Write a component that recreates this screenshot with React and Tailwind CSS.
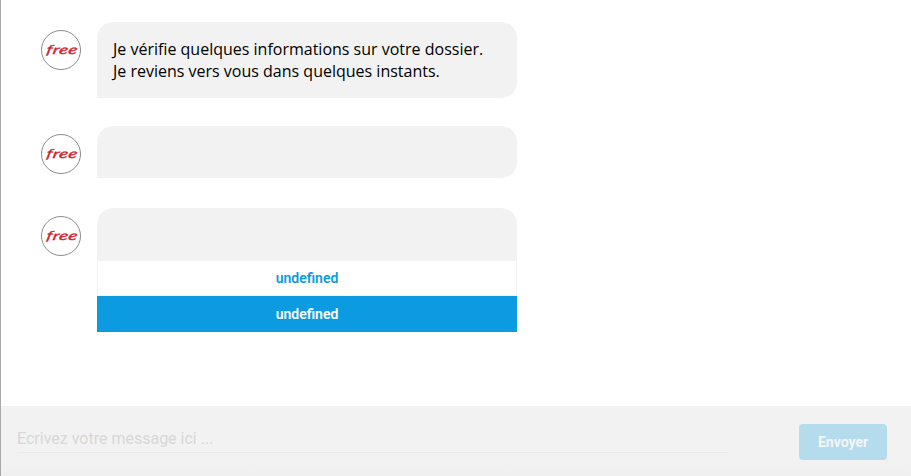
import { useState } from 'react';

const messages = [
    { id: 1, lines: ['Je vérifie quelques informations sur votre dossier.', 'Je reviens vers vous dans quelques instants.'], choices: [] },
    { id: 2, lines: [], choices: [] },
    { id: 3, lines: [], choices: [
        { label: 'undefined', primary: false },
        { label: 'undefined', primary: true },
    ] },
];

function Avatar() {
    return (
        <div className="mt-2 h-10 w-10 shrink-0 overflow-hidden rounded-full border border-[#8c8c8c] bg-white">
            <svg viewBox="0 0 38 38" className="h-full w-full" role="img" aria-label="free">
                {/* étiré en largeur, avec un peu d'air entre les lettres */}
                <text
                    transform="translate(3.8 22.9) skewX(-12) scale(1.48 1)"
                    className="fill-[#d2202c] stroke-[#d2202c] stroke-[0.35] font-['Lato'] text-[12.5px] font-normal tracking-[0.3px] italic"
                >
                    free
                </text>
            </svg>
        </div>
    );
}

function Message({ lines, choices }) {
    const corners = choices.length ? 'rounded-t-2xl' : 'rounded-2xl rounded-bl-none';

    return (
        <div className="flex gap-4">
            <Avatar />
            <div className="w-[420px]">
                <div className={`min-h-[52px] bg-[#f2f2f2] p-4 text-base leading-[22px] text-black font-['Open_Sans',sans-serif] ${corners}`}>
                    {lines.map(line => (
                        <p key={line} className="whitespace-nowrap">{line}</p>
                    ))}
                </div>
                {choices.map((choice, i) => (
                    <button
                        key={i}
                        className={`block h-9 w-full border text-sm font-semibold ${choice.primary ? 'border-[#0c9be1] bg-[#0c9be1] text-white' : 'border-[#f2f2f2] bg-white text-[#0c9be1]'}`}
                    >
                        {choice.label}
                    </button>
                ))}
            </div>
        </div>
    );
}

export default function App() {
    const [draft, setDraft] = useState('');

    return (
        <div className="flex h-screen flex-col overflow-hidden border-l border-[#aaaaaa] bg-white font-['Roboto',sans-serif]">
            {/* Conversation */}
            <main className="flex flex-1 flex-col pt-[22px] pl-10">
                {messages.map(m => (
                    <div key={m.id} className={m.id === 1 ? 'mb-7' : 'mb-[30px]'}>
                        <Message lines={m.lines} choices={m.choices} />
                    </div>
                ))}
            </main>

            {/* Saisie */}
            <footer className="flex h-[70px] shrink-0 items-start justify-between bg-linear-to-b from-[#f2f2f2] from-70% to-[#f0f0f0] pt-[18px] pr-6 pl-4">
                <input
                    value={draft}
                    onChange={e => setDraft(e.target.value)}
                    placeholder="Ecrivez votre message ici ..."
                    className="h-[29px] w-[711px] border-b border-[#e9e9e9] bg-transparent text-base outline-none placeholder:text-[#d7d7d7]"
                />
                <button className="h-9 w-[88px] rounded bg-[#b5dced] text-sm font-bold text-[#f3f6f8]">
                    Envoyer
                </button>
            </footer>
        </div>
    );
}
